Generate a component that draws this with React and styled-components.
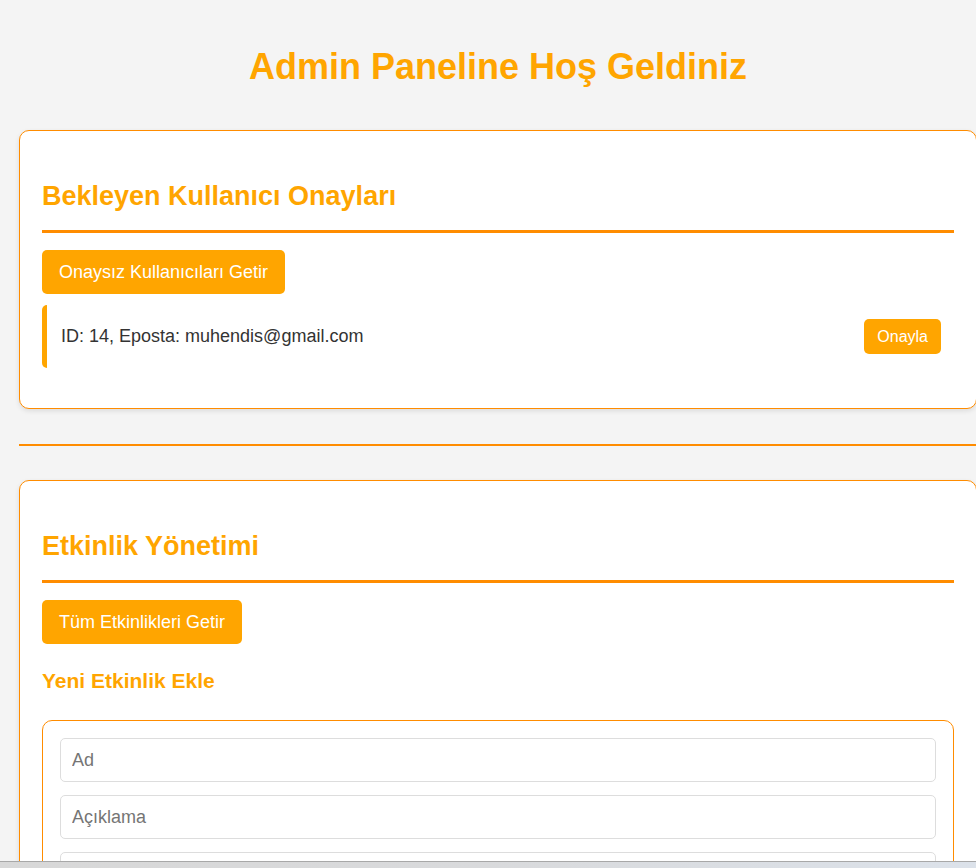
import React from "react";
import styled, { createGlobalStyle } from "styled-components";

const Global = createGlobalStyle`
  * { box-sizing: border-box; }
  html, body { margin: 0; padding: 0; }
  body {
    background: #f4f4f4;
    font-family: "Liberation Sans", Arial, sans-serif;
    color: #333;
    overflow: hidden;
  }
`;

const Page = styled.div`
  width: 977px;
  padding: 0 0 0 19px;
`;

const Title = styled.h1`
  margin: 0;
  padding: 46px 0 0;
  height: 130px;
  text-align: center;
  color: #ffa500;
  font-size: 36px;
  font-weight: bold;
  line-height: 42px;
`;

const Card = styled.section`
  background: #fff;
  border: 1px solid #ff8c00;
  border-radius: 10px;
  box-shadow: 0 2px 5px rgba(0, 0, 0, 0.1);
  padding: 44px 22px 40px;
`;

const SectionTitle = styled.h2`
  margin: 0 0 17px;
  padding: 5px 0 18px;
  color: #ffa500;
  font-size: 27px;
  font-weight: bold;
  line-height: 32px;
  border-bottom: 3px solid #ff8c00;
`;

const Button = styled.button`
  display: inline-block;
  background: #ffa500;
  color: #fff;
  border: none;
  border-radius: 5px;
  font-family: "Liberation Sans", Arial, sans-serif;
  font-size: ${(p) => (p.$small ? "16px" : "18px")};
  line-height: 20px;
  padding: ${(p) => (p.$small ? "7px 13px" : "12px 17px")};
  height: ${(p) => (p.$small ? "35px" : "44px")};
  cursor: pointer;
`;

const List = styled.div`
  margin-top: 11px;
`;

const Item = styled.div`
  display: flex;
  align-items: center;
  justify-content: space-between;
  border-left: 5px solid #ffa500;
  border-radius: 5px;
  padding: 14px 13px 14px 14px;
  font-size: 18px;
  color: #333;
`;

const Divider = styled.hr`
  margin: 35px 0 34px;
  border: none;
  border-top: 2px solid #ff8c00;
`;

const SubTitle = styled.h3`
  margin: 25px 0 27px;
  color: #ffa500;
  font-size: 21px;
  font-weight: bold;
  line-height: 24px;
`;

const Form = styled.div`
  border: 1px solid #ff8c00;
  border-radius: 10px;
  padding: 17px 17px;
  display: flex;
  flex-direction: column;
  gap: 13px;
`;

const Input = styled.input`
  height: 44px;
  width: 100%;
  border: 1px solid #ddd;
  border-radius: 5px;
  padding: 0 11px;
  font-size: 18px;
  font-family: "Liberation Sans", Arial, sans-serif;
  color: #333;
  background: #fff;
  &::placeholder { color: #757575; }
`;

const BottomBar = styled.div`
  position: fixed;
  left: 0;
  right: 0;
  bottom: 0;
  height: 7px;
  border-top: 1px solid #a8a8a8;
  background: linear-gradient(90deg, #d8d8d8 0%, #d9dadc 50%, #dce2ea 100%);
`;

export default function App() {
  return (
    <>
      <Global />
      <Page>
        <Title>Admin Paneline Hoş Geldiniz</Title>
        <Card>
          <SectionTitle>Bekleyen Kullanıcı Onayları</SectionTitle>
          <Button>Onaysız Kullanıcıları Getir</Button>
          <List>
            <Item>
              <span>ID: 14, Eposta: muhendis@gmail.com</span>
              <Button $small>Onayla</Button>
            </Item>
          </List>
        </Card>
        <Divider />
        <Card>
          <SectionTitle>Etkinlik Yönetimi</SectionTitle>
          <Button>Tüm Etkinlikleri Getir</Button>
          <SubTitle>Yeni Etkinlik Ekle</SubTitle>
          <Form>
            <Input placeholder="Ad" />
            <Input placeholder="Açıklama" />
            <Input placeholder="Tarih" />
            <Input placeholder="Yer" />
          </Form>
        </Card>
      </Page>
      <BottomBar />
    </>
  );
}
